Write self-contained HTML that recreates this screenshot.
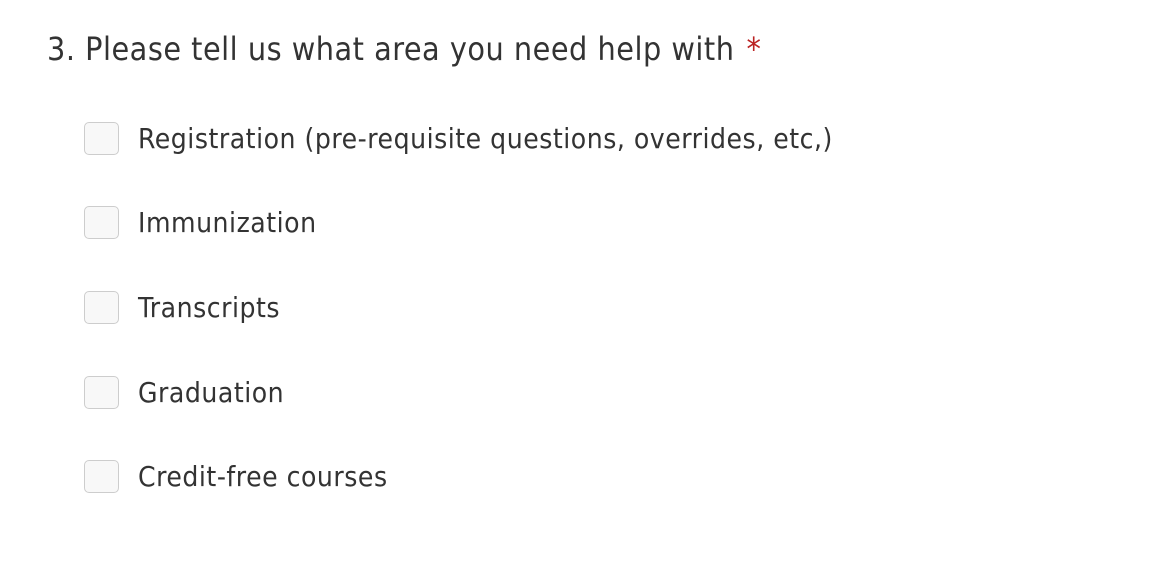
<!DOCTYPE html>
<html><head><style>
body{margin:0;background:#fff;width:1164px;height:570px;overflow:hidden;font-family:"DejaVu Sans Condensed","Liberation Sans",sans-serif;color:#333}
.t{position:absolute;left:47px;top:30px;font-size:32px;white-space:nowrap;letter-spacing:0.5px}
.t span{color:#b22;margin-left:12px}
.r{position:absolute;left:84px;height:36px;width:1000px}
.cb{position:absolute;left:0;top:0;width:33px;height:31px;border:1.5px solid #cdcdcd;border-radius:5px;background:#f8f8f8}
.l{position:absolute;left:54px;top:-1px;font-size:28px;line-height:36px;white-space:nowrap;letter-spacing:0.52px}
</style></head><body>
<div class="t">3. Please tell us what area you need help with<span>*</span></div>
<div class="r" style="top:122px"><div class="cb"></div><div class="l">Registration (pre-requisite questions, overrides, etc,)</div></div>
<div class="r" style="top:206px"><div class="cb"></div><div class="l">Immunization</div></div>
<div class="r" style="top:291px"><div class="cb"></div><div class="l">Transcripts</div></div>
<div class="r" style="top:376px"><div class="cb"></div><div class="l">Graduation</div></div>
<div class="r" style="top:460px"><div class="cb"></div><div class="l">Credit-free courses</div></div>
</body></html>
